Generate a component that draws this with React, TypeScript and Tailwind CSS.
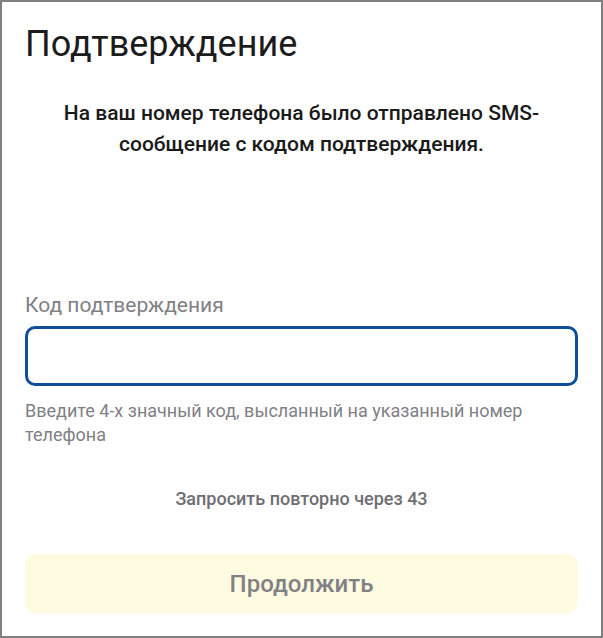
export default function App() {
  return (
    <div className="h-[638px] w-[603px] border-2 border-[#808080] bg-white font-['Roboto',sans-serif]">
      <div className="flex flex-col px-[23px]">
        <h1 className="mt-[20px] text-[36px] leading-[44px] font-normal text-[#1c1c1c]">Подтверждение</h1>

        <p className="mt-[32px] text-center text-[21px] leading-[31px] font-medium text-[#1a1a1a]">
          На ваш номер телефона было отправлено SMS-
          <br />
          сообщение с кодом подтверждения.
        </p>

        <label className="mt-[133px] text-[21px] leading-[24px] text-[#808085]">Код подтверждения</label>
        <input
          type="text"
          className="mt-[9px] h-[60px] w-full rounded-[10px] border-[3px] border-[#0f4e98] px-4 text-[18px] outline-none"
        />
        <p className="mt-[13px] text-[18px] leading-[24px] text-[#808085]">
          Введите 4-х значный код, высланный на указанный номер телефона
        </p>

        <p className="mt-[40px] text-center text-[18px] leading-[24px] font-medium text-[#6e6e73]">
          Запросить повторно через 43
        </p>

        <button className="mt-[43px] h-[59px] w-full rounded-[10px] bg-[#fffbe1] text-[24px] font-medium text-[#808085]">
          Продолжить
        </button>
      </div>
    </div>
  );
}
